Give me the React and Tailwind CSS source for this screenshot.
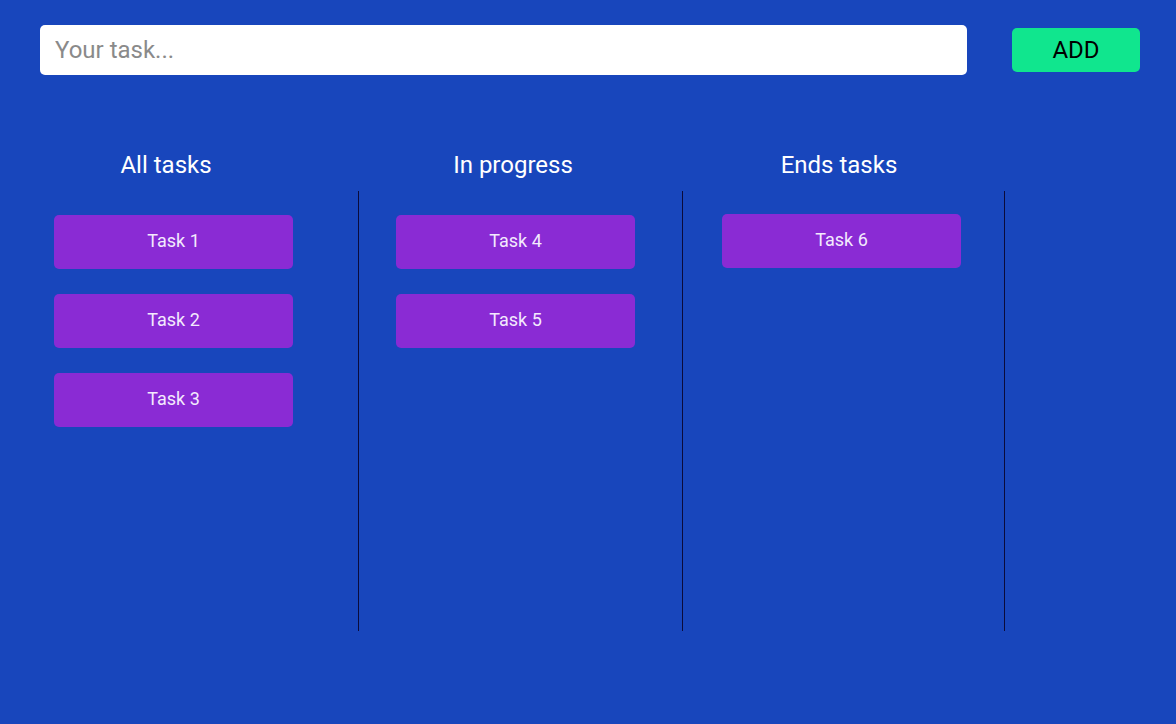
import React, { useState } from "react";

const columns = [
  { title: "All tasks", width: "w-[319px]", head: "w-[252px]", pad: "pl-[14px] pt-[24px]", tasks: ["Task 1", "Task 2", "Task 3"] },
  { title: "In progress", width: "w-[324px]", head: "w-[308px]", pad: "pl-[37px] pt-[24px]", tasks: ["Task 4", "Task 5"] },
  { title: "Ends tasks", width: "w-[322px]", head: "w-[312px]", pad: "pl-[39px] pt-[23px]", tasks: ["Task 6"] },
];

export default function App() {
  const [task, setTask] = useState("");

  return (
    <div
      className="min-h-[724px] w-full bg-[#1846bc] pl-[40px] pt-[25px]"
      style={{ fontFamily: "Roboto, 'Noto Sans', sans-serif" }}
    >
      <div className="flex items-center gap-[45px]">
        <input
          value={task}
          onChange={(e) => setTask(e.target.value)}
          placeholder="Your task..."
          className="h-[50px] w-[927px] rounded-[5px] bg-white px-[15px] text-[24px] text-gray-800 outline-none placeholder:text-[#8a8a8a]"
        />
        <button className="h-[44px] w-[128px] rounded-[5px] bg-[#10e68e] text-[24px] text-black">
          ADD
        </button>
      </div>

      <div className="mt-[74px] flex">
        {columns.map((col) => (
          <div key={col.title} className={col.width}>
            <h2 className={`${col.head} mb-[10px] h-[32px] text-center text-[24px] leading-[32px] font-normal text-white`}>
              {col.title}
            </h2>
            <div className={`h-[440px] border-r border-[#0b0b3a] ${col.pad} flex flex-col gap-[25px]`}>
              {col.tasks.map((t) => (
                <div
                  key={t}
                  className="flex h-[54px] w-[239px] items-center justify-center rounded-[5px] bg-[#8a2bd4] pb-[4px] text-[18px] text-[#f3eafd]"
                >
                  {t}
                </div>
              ))}
            </div>
          </div>
        ))}
      </div>
    </div>
  );
}
